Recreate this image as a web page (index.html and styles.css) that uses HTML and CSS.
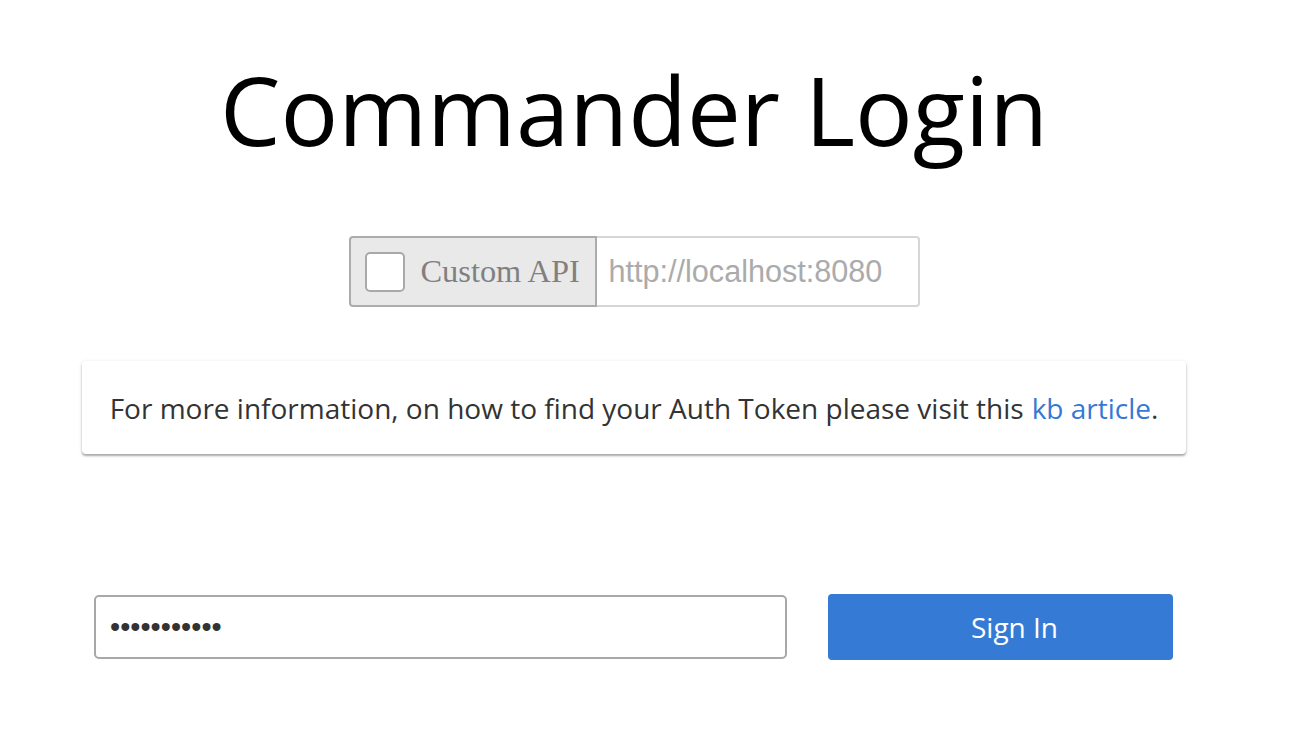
FILE: index.html
```html
<!DOCTYPE html>
<html>
<head>
<meta charset="utf-8">
<link rel="stylesheet" href="styles.css">
</head>
<body>
<main class="page">
  <h1 class="title">Commander Login</h1>
  <div class="api-group">
    <label class="api-addon">
      <span class="check"></span>
      <span class="api-label">Custom API</span>
    </label>
    <input class="api-input" type="text" placeholder="http://localhost:8080">
  </div>
  <div class="info-card">
    For more information, on how to find your Auth Token please visit this <a href="#" class="kb">kb article</a>.
  </div>
  <div class="login-row">
    <input class="token" type="password" value="abcdefghijk">
    <button class="signin">Sign In</button>
  </div>
</main>
</body>
</html>
```
FILE: styles.css
```css
html, body {
  margin: 0;
  padding: 0;
  background: #ffffff;
}
body {
  font-family: "Open Sans", "Liberation Sans", sans-serif;
  color: #000;
}
.page {
  width: 1104px;
  margin-left: 82px;
  display: flex;
  flex-direction: column;
  align-items: center;
}
.title {
  margin: 44px 0 0 0;
  font-weight: 400;
  font-size: 96px;
  line-height: 130px;
  color: #000;
}
.api-group {
  margin-top: 62px;
  margin-left: 0;
  display: flex;
  height: 71px;
  box-sizing: border-box;
}
.api-addon {
  display: flex;
  align-items: center;
  width: 248px;
  box-sizing: border-box;
  background: #e9e9e9;
  border: 2px solid #acacac;
  border-radius: 4px 0 0 4px;
  padding-left: 14px;
}
.check {
  flex: none;
  width: 36px;
  height: 36px;
  border: 2px solid #a9a9a9;
  border-radius: 5px;
  background: #fff;
}
.api-label {
  margin-left: 16px;
  font-family: "Liberation Serif", serif;
  font-size: 32.4px;
  color: #808080;
  white-space: nowrap;
}
.api-input {
  width: 323px;
  box-sizing: border-box;
  border: 2px solid #d6d6d6;
  border-left: none;
  border-radius: 0 4px 4px 0;
  padding: 0 12px;
  font-family: "Liberation Sans", sans-serif;
  font-size: 30.6px;
  outline: none;
}
.api-input::placeholder {
  color: #ababab;
}
.info-card {
  align-self: stretch;
  margin-top: 54px;
  height: 93px;
  box-sizing: border-box;
  background: #fff;
  border-radius: 4px;
  box-shadow: 0 1px 4px rgba(0,0,0,0.12), 0 2px 2px rgba(0,0,0,0.28);
  display: flex;
  align-items: center;
  justify-content: center;
  font-size: 28px;
  color: #333;
  white-space: nowrap;
}
.kb {
  color: #3479d5;
  text-decoration: none;
  margin-left: 8px;
}
.login-row {
  align-self: stretch;
  margin-top: 140px;
  padding: 0 13px 0 12px;
  display: flex;
  justify-content: space-between;
  align-items: center;
}
.token {
  width: 693px;
  height: 64px;
  box-sizing: border-box;
  border: 2px solid #a8a8a8;
  border-radius: 5px;
  padding: 0 14px;
  font-size: 29px;
  color: #333;
  outline: none;
}
.signin {
  width: 345px;
  height: 66px;
  border: none;
  border-radius: 4px;
  background: #357bd6;
  color: #fff;
  padding: 0 0 0 28px;
  font-family: "Open Sans", sans-serif;
  font-size: 28px;
}
```
